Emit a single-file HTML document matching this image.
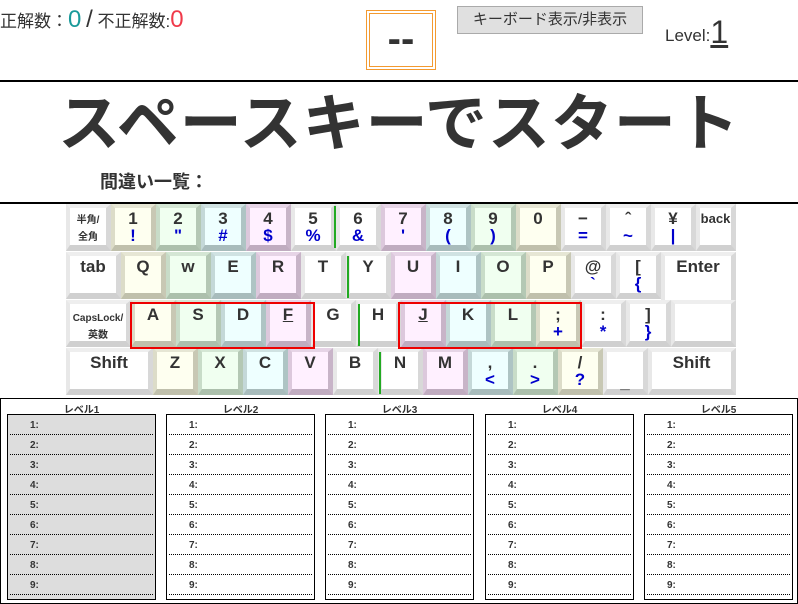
<!DOCTYPE html>
<html><head><meta charset="utf-8">
<style>
*{margin:0;padding:0;box-sizing:border-box}
body{width:798px;height:604px;background:#fff;font-family:"Liberation Sans","Noto Sans CJK JP",sans-serif;color:#333;position:relative;overflow:hidden}
.abs{position:absolute}
.k{position:absolute;height:47px;border-style:solid;border-width:4px 5px 6px 4px;text-align:center;font-weight:bold;font-size:17px;line-height:17px;padding-top:2px;color:#333}
.w{background:#fff;border-color:#eee #d8d8d8 #d0d0d0 #e8e8e8}
.y{background:#fefff0;border-color:#e6e6d4 #c8c8b4 #c0c0ac #dcdcc8}
.g{background:#f0fff0;border-color:#d4e6d4 #b4c8b4 #acc0ac #c8dcc8}
.c{background:#eeffff;border-color:#d0e2e2 #aec4c4 #a8bcbc #c4d8d8}
.p{background:#fff0ff;border-color:#e6d4e6 #c8b4c8 #c0acc0 #dcc8dc}
.b{color:#00c;display:block}
.gl{position:absolute;width:2px;background:#2a2;height:42px}
.red{position:absolute;border:2px solid #e00}
.lv{position:absolute;top:414px;width:149px;height:186px;border:1px solid #000}
.lh{position:absolute;top:401px;width:149px;text-align:center;font-size:10px;font-weight:bold}
.row{height:20px;border-bottom:1px dotted #000;font-size:10px;font-weight:bold;padding:5px 0 0 20px;margin:0 2px}
</style></head><body>
<div class="abs" style="left:0;top:6px;font-size:17px;color:#333">正解数：<span style="color:#1a9a9a;font-size:24px">0</span> <span style="font-size:24px">/</span> 不正解数:<span style="color:#f03a4a;font-size:24px">0</span></div>
<div class="abs" style="left:366px;top:10px;width:70px;height:60px;border:4px double #f39a30;text-align:center;font-size:40px;font-weight:bold;line-height:50px">--</div>
<div class="abs" style="left:457px;top:6px;width:186px;height:28px;background:#e0e0e0;border:1px solid #aaa;font-size:15px;text-align:center;line-height:25px">キーボード表示/非表示</div>
<div class="abs" style="left:665px;top:14px;font-size:17px">Level:<span style="font-size:32px;text-decoration:underline;vertical-align:-2px">1</span></div>
<div class="abs" style="left:0;top:80px;width:798px;height:2px;background:#000"></div>
<div class="abs" style="left:0;top:73px;width:798px;text-align:center;font-size:62px;font-weight:bold;color:#333;letter-spacing:1px">スペースキーでスタート</div>
<div class="abs" style="left:100px;top:168px;font-size:18px;font-weight:bold">間違い一覧：</div>
<div class="abs" style="left:0;top:202px;width:798px;height:2px;background:#000"></div>

<div class="k w" style="left:66px;top:204px;width:45px;font-size:10px;line-height:17px;padding-top:4px">半角/<br>全角</div>
<div class="k y" style="left:111px;top:204px;width:45px">1<span class="b">!</span></div>
<div class="k g" style="left:156px;top:204px;width:45px">2<span class="b">"</span></div>
<div class="k c" style="left:201px;top:204px;width:45px">3<span class="b">#</span></div>
<div class="k p" style="left:246px;top:204px;width:45px">4<span class="b">$</span></div>
<div class="k w" style="left:291px;top:204px;width:45px">5<span class="b">%</span></div>
<div class="k w" style="left:336px;top:204px;width:45px">6<span class="b">&amp;</span></div>
<div class="k p" style="left:381px;top:204px;width:45px">7<span class="b">'</span></div>
<div class="k c" style="left:426px;top:204px;width:45px">8<span class="b">(</span></div>
<div class="k g" style="left:471px;top:204px;width:45px">9<span class="b">)</span></div>
<div class="k y" style="left:516px;top:204px;width:45px">0<span class="b">&nbsp;</span></div>
<div class="k w" style="left:561px;top:204px;width:45px">−<span class="b">=</span></div>
<div class="k w" style="left:606px;top:204px;width:45px">ˆ<span class="b">~</span></div>
<div class="k w" style="left:651px;top:204px;width:45px">¥<span class="b">|</span></div>
<div class="k w" style="left:696px;top:204px;width:40px;font-size:13px">back</div>
<div class="k w" style="left:66px;top:252px;width:55px">tab</div>
<div class="k y" style="left:121px;top:252px;width:45px">Q</div>
<div class="k g" style="left:166px;top:252px;width:45px">w</div>
<div class="k c" style="left:211px;top:252px;width:45px">E</div>
<div class="k p" style="left:256px;top:252px;width:45px">R</div>
<div class="k w" style="left:301px;top:252px;width:45px">T</div>
<div class="k w" style="left:346px;top:252px;width:45px">Y</div>
<div class="k p" style="left:391px;top:252px;width:45px">U</div>
<div class="k c" style="left:436px;top:252px;width:45px">I</div>
<div class="k g" style="left:481px;top:252px;width:45px">O</div>
<div class="k y" style="left:526px;top:252px;width:45px">P</div>
<div class="k w" style="left:571px;top:252px;width:45px">@<span class="b">`</span></div>
<div class="k w" style="left:616px;top:252px;width:45px">[<span class="b">{</span></div>
<div class="k w" style="left:661px;top:252px;width:75px;height:50px;border-bottom-width:0">Enter</div>
<div class="k w" style="left:66px;top:300px;width:65px;font-size:10px;padding-top:6px">CapsLock/<br>英数</div>
<div class="k y" style="left:131px;top:300px;width:45px">A</div>
<div class="k g" style="left:176px;top:300px;width:45px">S</div>
<div class="k c" style="left:221px;top:300px;width:45px">D</div>
<div class="k p" style="left:266px;top:300px;width:45px"><u>F</u></div>
<div class="k w" style="left:311px;top:300px;width:45px">G</div>
<div class="k w" style="left:356px;top:300px;width:45px">H</div>
<div class="k p" style="left:401px;top:300px;width:45px"><u>J</u></div>
<div class="k c" style="left:446px;top:300px;width:45px">K</div>
<div class="k g" style="left:491px;top:300px;width:45px">L</div>
<div class="k y" style="left:536px;top:300px;width:45px">;<span class="b">+</span></div>
<div class="k w" style="left:581px;top:300px;width:45px">:<span class="b">*</span></div>
<div class="k w" style="left:626px;top:300px;width:45px">]<span class="b">}</span></div>
<div class="k w" style="left:671px;top:300px;width:65px"></div>
<div class="k w" style="left:66px;top:348px;width:87px">Shift</div>
<div class="k y" style="left:153px;top:348px;width:45px">Z</div>
<div class="k g" style="left:198px;top:348px;width:45px">X</div>
<div class="k c" style="left:243px;top:348px;width:45px">C</div>
<div class="k p" style="left:288px;top:348px;width:45px">V</div>
<div class="k w" style="left:333px;top:348px;width:45px">B</div>
<div class="k w" style="left:378px;top:348px;width:45px">N</div>
<div class="k p" style="left:423px;top:348px;width:45px">M</div>
<div class="k c" style="left:468px;top:348px;width:45px">,<span class="b">&lt;</span></div>
<div class="k g" style="left:513px;top:348px;width:45px">.<span class="b">&gt;</span></div>
<div class="k y" style="left:558px;top:348px;width:45px">/<span class="b">?</span></div>
<div class="k w" style="left:603px;top:348px;width:45px"><span style="display:block;margin-top:20px">_</span></div>
<div class="k w" style="left:648px;top:348px;width:88px">Shift</div>

<div class="gl" style="left:334px;top:206px"></div>
<div class="gl" style="left:347px;top:256px"></div>
<div class="gl" style="left:358px;top:304px"></div>
<div class="gl" style="left:379px;top:352px"></div>
<div class="red" style="left:130px;top:302px;width:185px;height:47px"></div>
<div class="red" style="left:398px;top:302px;width:184px;height:47px"></div>

<div class="abs" style="left:0;top:398px;width:798px;height:206px;border:1px solid #000"></div>
<div class="lh" style="left:7px">レベル1</div>
<div class="lh" style="left:166px">レベル2</div>
<div class="lh" style="left:325px">レベル3</div>
<div class="lh" style="left:485px">レベル4</div>
<div class="lh" style="left:644px">レベル5</div>
<div class="lv" style="left:7px;background:#ddd"><div class="row">1:</div><div class="row">2:</div><div class="row">3:</div><div class="row">4:</div><div class="row">5:</div><div class="row">6:</div><div class="row">7:</div><div class="row">8:</div><div class="row">9:</div></div>
<div class="lv" style="left:166px"><div class="row">1:</div><div class="row">2:</div><div class="row">3:</div><div class="row">4:</div><div class="row">5:</div><div class="row">6:</div><div class="row">7:</div><div class="row">8:</div><div class="row">9:</div></div>
<div class="lv" style="left:325px"><div class="row">1:</div><div class="row">2:</div><div class="row">3:</div><div class="row">4:</div><div class="row">5:</div><div class="row">6:</div><div class="row">7:</div><div class="row">8:</div><div class="row">9:</div></div>
<div class="lv" style="left:485px"><div class="row">1:</div><div class="row">2:</div><div class="row">3:</div><div class="row">4:</div><div class="row">5:</div><div class="row">6:</div><div class="row">7:</div><div class="row">8:</div><div class="row">9:</div></div>
<div class="lv" style="left:644px"><div class="row">1:</div><div class="row">2:</div><div class="row">3:</div><div class="row">4:</div><div class="row">5:</div><div class="row">6:</div><div class="row">7:</div><div class="row">8:</div><div class="row">9:</div></div>
</body></html>
